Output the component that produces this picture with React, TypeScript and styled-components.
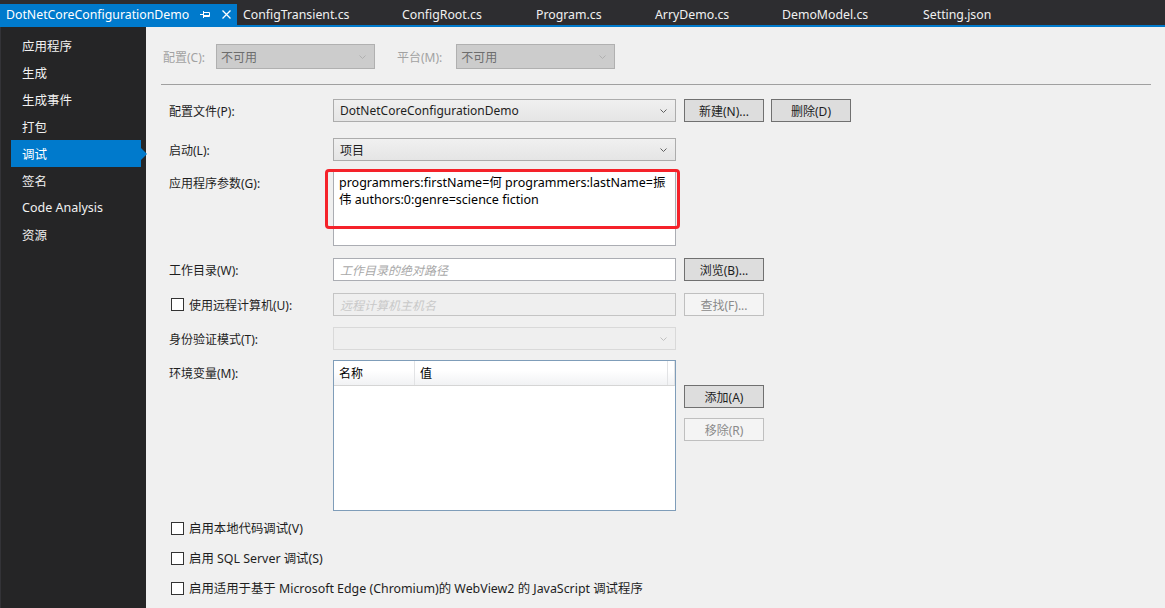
import React from "react";
import styled, { createGlobalStyle, css } from "styled-components";

const FONT = `"Segoe UI", "Noto Sans", "Noto Sans CJK SC", sans-serif`;

const GlobalStyle = createGlobalStyle`
  html, body { margin: 0; padding: 0; }
  body {
    background: #f0f0f0;
    font-family: ${FONT};
    font-size: 12px;
    color: #1e1e1e;
  }
  * { box-sizing: border-box; }
`;

const Root = styled.div`
  width: 1165px;
  height: 608px;
  display: flex;
  flex-direction: column;
  overflow: hidden;
  background: #f0f0f0;
`;

const TabBar = styled.div`
  height: 27px;
  flex: none;
  display: flex;
  align-items: flex-end;
  background: #2d2d30;
  border-bottom: 2px solid #007acc;
`;

const Tab = styled.div<{ $active?: boolean; $w: number }>`
  width: ${(p) => p.$w}px;
  height: 21px;
  flex: none;
  display: flex;
  align-items: center;
  padding-left: 6px;
  padding-bottom: 1px;
  font-size: 12.3px;
  color: #f1f1f1;
  white-space: nowrap;
  ${(p) =>
    p.$active &&
    css`
      background: #007acc;
      color: #ffffff;
    `}
`;

const TabIcons = styled.div`
  display: flex;
  align-items: center;
  gap: 11px;
  margin-left: auto;
  margin-right: 6px;
`;

const Body = styled.div`
  flex: 1;
  display: flex;
  min-height: 0;
`;

const Sidebar = styled.nav`
  width: 146px;
  flex: none;
  background: #252526;
  border-left: 1px solid #333337;
  padding-top: 5px;
`;

const NavItem = styled.div<{ $active?: boolean }>`
  position: relative;
  height: 27px;
  margin: 0 5px 0 10px;
  padding-left: 11px;
  display: flex;
  align-items: center;
  font-size: 12.5px;
  color: #f1f1f1;
  ${(p) =>
    p.$active &&
    css`
      background: #007acc;
      color: #ffffff;
      &::after {
        content: "";
        position: absolute;
        right: -6px;
        top: 50%;
        margin-top: -6px;
        border-style: solid;
        border-width: 6px 0 6px 6px;
        border-color: transparent transparent transparent #007acc;
      }
    `}
`;

const Main = styled.main`
  flex: 1;
  padding: 17px 0 0 15px;
  display: flex;
  flex-direction: column;
`;

const ConfigBar = styled.div`
  display: flex;
  align-items: center;
  height: 25px;
  padding-left: 2px;
`;

const DimLabel = styled.span<{ $gapLeft?: number; $gapRight: number }>`
  color: #a2a2a2;
  margin-left: ${(p) => p.$gapLeft ?? 0}px;
  margin-right: ${(p) => p.$gapRight}px;
  white-space: nowrap;
`;

const Separator = styled.div`
  height: 1px;
  background: #a0a0a0;
  margin-top: 15px;
  width: 990px;
`;

const Form = styled.div`
  display: flex;
  flex-direction: column;
  padding-left: 8px;
`;

const Row = styled.div<{ $mt: number }>`
  display: flex;
  align-items: flex-start;
  margin-top: ${(p) => p.$mt}px;
`;

const Label = styled.div<{ $tall?: boolean }>`
  width: 164px;
  flex: none;
  height: 23px;
  display: flex;
  align-items: center;
  white-space: nowrap;
  ${(p) =>
    p.$tall &&
    css`
      padding-top: 3px;
    `}
`;

const Control = styled.div`
  width: 343px;
  flex: none;
  position: relative;
`;

const SelectBox = styled.div<{ $variant?: "normal" | "disabled" | "dim"; $w?: number }>`
  width: ${(p) => (p.$w ? `${p.$w}px` : "100%")};
  height: ${(p) => (p.$variant === "dim" ? 25 : 23)}px;
  display: flex;
  align-items: center;
  padding: 0 8px 0 6px;
  border: 1px solid #acacac;
  background: linear-gradient(#f0f0f0, #e5e5e5);
  color: #1e1e1e;
  white-space: nowrap;
  ${(p) =>
    p.$variant === "disabled" &&
    css`
      background: #efefef;
      border-color: #d9d9d9;
    `}
  ${(p) =>
    p.$variant === "dim" &&
    css`
      background: #cccccc;
      border-color: #b0b0b0;
      color: #6d6d6d;
      padding-left: 4px;
    `}
`;

const Chevron = styled.svg`
  margin-left: auto;
  flex: none;
`;

const TextArea = styled.div`
  width: 100%;
  height: 76px;
  background: #ffffff;
  border: 1px solid #abadb3;
  padding: 3px 5px;
  line-height: 17px;
  font-size: 12.5px;
  color: #000;
`;

const Highlight = styled.div`
  position: absolute;
  left: -8px;
  top: -1px;
  width: 355px;
  height: 60px;
  border: 3px solid #f5222a;
  border-radius: 4px;
  pointer-events: none;
`;

const TextInput = styled.div<{ $disabled?: boolean }>`
  width: 100%;
  height: 23px;
  display: flex;
  align-items: center;
  padding-left: 6px;
  background: ${(p) => (p.$disabled ? "#efefef" : "#ffffff")};
  border: 1px solid ${(p) => (p.$disabled ? "#c4c4c4" : "#abadb3")};
  color: ${(p) => (p.$disabled ? "#c9c9c9" : "#a9a9a9")};
  font-style: italic;
`;

const Buttons = styled.div<{ $column?: boolean; $mt?: number }>`
  display: flex;
  flex-direction: ${(p) => (p.$column ? "column" : "row")};
  gap: ${(p) => (p.$column ? 10 : 7)}px;
  margin-left: 8px;
  margin-top: ${(p) => p.$mt ?? 0}px;
`;

const Button = styled.div<{ $disabled?: boolean }>`
  width: 80px;
  height: 23px;
  display: flex;
  align-items: center;
  justify-content: center;
  border: 1px solid #707070;
  background: #dddddd;
  color: #1e1e1e;
  white-space: nowrap;
  ${(p) =>
    p.$disabled &&
    css`
      border-color: #bfbfbf;
      background: #f4f4f4;
      color: #8a8a8a;
    `}
`;

const CheckLabel = styled.label`
  display: flex;
  align-items: center;
  gap: 5px;
  padding-left: 2px;
  white-space: nowrap;
`;

const Box = styled.span`
  width: 13px;
  height: 13px;
  flex: none;
  border: 1px solid #333333;
  background: #ffffff;
`;

const Table = styled.div`
  width: 100%;
  height: 151px;
  background: #ffffff;
  border: 1px solid #7f9db9;
  display: flex;
  flex-direction: column;
`;

const TableHead = styled.div`
  height: 25px;
  display: flex;
  background: linear-gradient(#ffffff 0%, #ffffff 40%, #f1f2f4 100%);
  border-bottom: 1px solid #d5d5d5;
`;

const HeadCell = styled.div<{ $w?: number }>`
  ${(p) => (p.$w ? `width: ${p.$w}px; flex: none;` : "flex: 1;")}
  display: flex;
  align-items: center;
  padding-left: 5px;
  border-right: 1px solid #e2e3e5;
  color: #000;
`;

const CheckRow = styled.div<{ $mt: number }>`
  margin-top: ${(p) => p.$mt}px;
  height: 20px;
  display: flex;
  align-items: center;
  font-size: 12.4px;
`;

const ChevronIcon = ({ color }: { color: string }) => (
  <Chevron width="7" height="4" viewBox="0 0 7 4">
    <polyline points="0.5,0.5 3.5,3.5 6.5,0.5" fill="none" stroke={color} strokeWidth="1" />
  </Chevron>
);

const PinIcon = () => (
  <svg width="11" height="9" viewBox="0 0 11 9">
    <path d="M0 4.5 H3.5 M3.5 1 V8 M3.5 2.5 H9.5 V6.5 H3.5 M3.5 5.5 H9.5" stroke="#ffffff" strokeWidth="1" fill="none" />
  </svg>
);

const CloseIcon = () => (
  <svg width="9" height="9" viewBox="0 0 9 9">
    <path d="M0.5 0.5 L8.5 8.5 M8.5 0.5 L0.5 8.5" stroke="#ffffff" strokeWidth="1.3" />
  </svg>
);

const tabs = [
  { name: "ConfigTransient.cs", w: 159 },
  { name: "ConfigRoot.cs", w: 134 },
  { name: "Program.cs", w: 119 },
  { name: "ArryDemo.cs", w: 127 },
  { name: "DemoModel.cs", w: 141 },
  { name: "Setting.json", w: 140 },
];

const navItems = ["应用程序", "生成", "生成事件", "打包", "调试", "签名", "Code Analysis", "资源"];

export default function App() {
  return (
    <Root>
      <GlobalStyle />
      <TabBar>
        <Tab $active $w={237}>
          DotNetCoreConfigurationDemo
          <TabIcons>
            <PinIcon />
            <CloseIcon />
          </TabIcons>
        </Tab>
        {tabs.map((t) => (
          <Tab key={t.name} $w={t.w}>
            {t.name}
          </Tab>
        ))}
      </TabBar>
      <Body>
        <Sidebar>
          {navItems.map((n) => (
            <NavItem key={n} $active={n === "调试"}>
              {n}
            </NavItem>
          ))}
        </Sidebar>
        <Main>
          <ConfigBar>
            <DimLabel $gapRight={11}>配置(C):</DimLabel>
            <SelectBox $variant="dim" $w={159}>
              不可用
              <ChevronIcon color="#b0b0b0" />
            </SelectBox>
            <DimLabel $gapLeft={22} $gapRight={14}>
              平台(M):
            </DimLabel>
            <SelectBox $variant="dim" $w={159}>
              不可用
              <ChevronIcon color="#b0b0b0" />
            </SelectBox>
          </ConfigBar>
          <Separator />
          <Form>
            <Row $mt={14}>
              <Label>配置文件(P):</Label>
              <Control>
                <SelectBox>
                  DotNetCoreConfigurationDemo
                  <ChevronIcon color="#606060" />
                </SelectBox>
              </Control>
              <Buttons>
                <Button>新建(N)...</Button>
                <Button>删除(D)</Button>
              </Buttons>
            </Row>
            <Row $mt={16}>
              <Label>启动(L):</Label>
              <Control>
                <SelectBox>
                  项目
                  <ChevronIcon color="#606060" />
                </SelectBox>
              </Control>
            </Row>
            <Row $mt={9}>
              <Label $tall>应用程序参数(G):</Label>
              <Control>
                <TextArea>
                  programmers:firstName=何 programmers:lastName=振
                  <br />
                  伟 authors:0:genre=science fiction
                </TextArea>
                <Highlight />
              </Control>
            </Row>
            <Row $mt={12}>
              <Label>工作目录(W):</Label>
              <Control>
                <TextInput>工作目录的绝对路径</TextInput>
              </Control>
              <Buttons>
                <Button>浏览(B)...</Button>
              </Buttons>
            </Row>
            <Row $mt={12}>
              <Label>
                <CheckLabel>
                  <Box />
                  使用远程计算机(U):
                </CheckLabel>
              </Label>
              <Control>
                <TextInput $disabled>远程计算机主机名</TextInput>
              </Control>
              <Buttons>
                <Button $disabled>查找(F)...</Button>
              </Buttons>
            </Row>
            <Row $mt={11}>
              <Label>身份验证模式(T):</Label>
              <Control>
                <SelectBox $variant="disabled">
                  <ChevronIcon color="#c0c0c0" />
                </SelectBox>
              </Control>
            </Row>
            <Row $mt={10}>
              <Label $tall>环境变量(M):</Label>
              <Control>
                <Table>
                  <TableHead>
                    <HeadCell $w={81}>名称</HeadCell>
                    <HeadCell>值</HeadCell>
                    <HeadCell $w={7} />
                  </TableHead>
                </Table>
              </Control>
              <Buttons $column $mt={25}>
                <Button>添加(A)</Button>
                <Button $disabled>移除(R)</Button>
              </Buttons>
            </Row>
            <CheckRow $mt={7}>
              <CheckLabel>
                <Box />
                启用本地代码调试(V)
              </CheckLabel>
            </CheckRow>
            <CheckRow $mt={10}>
              <CheckLabel>
                <Box />
                启用 SQL Server 调试(S)
              </CheckLabel>
            </CheckRow>
            <CheckRow $mt={10}>
              <CheckLabel>
                <Box />
                启用适用于基于 Microsoft Edge (Chromium)的 WebView2 的 JavaScript 调试程序
              </CheckLabel>
            </CheckRow>
          </Form>
        </Main>
      </Body>
    </Root>
  );
}
